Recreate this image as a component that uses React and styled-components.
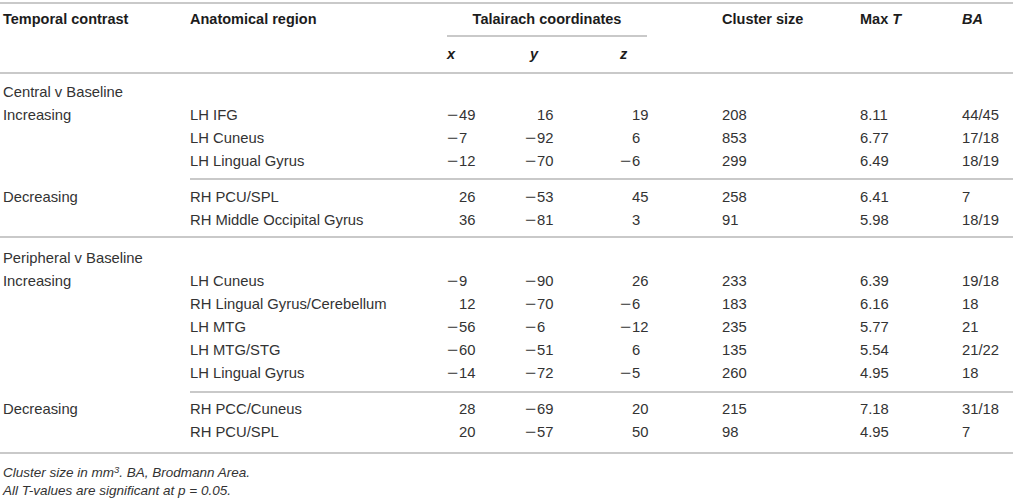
import React from 'react';
import styled, { createGlobalStyle } from 'styled-components';

const Global = createGlobalStyle`
  html, body { margin: 0; padding: 0; background: #fff; }
  body { font-family: "Liberation Sans", Arial, Helvetica, sans-serif; color: #333; }
`;

const RULE = '#c9c9c9';

const Page = styled.div`
  width: 1013px;
  padding-top: 2px;
`;

const Table = styled.table`
  width: 1013px;
  table-layout: fixed;
  border-collapse: separate;
  border-spacing: 0;
  font-size: 14.8px;
  line-height: 23px;
`;

const HeadCell = styled.th`
  padding: ${p => p.$pt ?? 0}px 0 ${p => p.$pb ?? 0}px ${p => p.$pl ?? 0}px;
  text-align: ${p => (p.$center ? 'center' : 'left')};
  vertical-align: top;
  font-size: 14.5px;
  font-weight: bold;
  color: #1c1c1c;
  white-space: nowrap;
  border-top: ${p => (p.$top ? `2px solid ${RULE}` : 'none')};
  border-bottom: ${p => (p.$bottom ? `2px solid ${RULE}` : 'none')};
`;

const Ital = styled.i`
  font-style: italic;
`;

const Cell = styled.td`
  padding: ${p => p.$pt ?? 0}px 0 ${p => p.$pb ?? 0}px ${p => p.$pl ?? 0}px;
  vertical-align: top;
  white-space: nowrap;
  color: #333;
  border-top: ${p =>
    p.$rule ? `2px solid ${RULE}` : p.$gap ? '2px solid transparent' : 'none'};
`;

const NumText = styled.span`
  display: inline-block;
  padding-left: ${p => (p.$pos ? 12 : 0)}px;
`;

const MinusSign = styled.span`
  display: inline-block;
  width: 12px;
  transform: scaleX(1.3);
  transform-origin: left center;
`;

const Notes = styled.div`
  margin-top: 10px;
  padding-left: 3px;
  font-size: 13.5px;
  line-height: 18px;
  font-style: italic;
  color: #333;
`;

const Sup = styled.sup`
  font-size: 0.7em;
  line-height: 0;
  vertical-align: 0.45em;
`;

const Num = ({ v }) =>
  v < 0 ? (
    <NumText>
      <MinusSign>−</MinusSign>
      {Math.abs(v)}
    </NumText>
  ) : (
    <NumText $pos>{v}</NumText>
  );

const sections = [
  {
    title: 'Central v Baseline',
    pad: 7,
    groups: [
      {
        label: 'Increasing',
        pt: 0,
        pb: 5,
        rows: [
          ['LH IFG', -49, 16, 19, 208, '8.11', '44/45'],
          ['LH Cuneus', -7, -92, 6, 853, '6.77', '17/18'],
          ['LH Lingual Gyrus', -12, -70, -6, 299, '6.49', '18/19'],
        ],
      },
      {
        label: 'Decreasing',
        pt: 6,
        pb: 4,
        rows: [
          ['RH PCU/SPL', 26, -53, 45, 258, '6.41', '7'],
          ['RH Middle Occipital Gyrus', 36, -81, 3, 91, '5.98', '18/19'],
        ],
      },
    ],
  },
  {
    title: 'Peripheral v Baseline',
    pad: 9,
    groups: [
      {
        label: 'Increasing',
        pt: 0,
        pb: 6,
        rows: [
          ['LH Cuneus', -9, -90, 26, 233, '6.39', '19/18'],
          ['RH Lingual Gyrus/Cerebellum', 12, -70, -6, 183, '6.16', '18'],
          ['LH MTG', -56, -6, -12, 235, '5.77', '21'],
          ['LH MTG/STG', -60, -51, 6, 135, '5.54', '21/22'],
          ['LH Lingual Gyrus', -14, -72, -5, 260, '4.95', '18'],
        ],
      },
      {
        label: 'Decreasing',
        pt: 5,
        pb: 8,
        rows: [
          ['RH PCC/Cuneus', 28, -69, 20, 215, '7.18', '31/18'],
          ['RH PCU/SPL', 20, -57, 50, 98, '4.95', '7'],
        ],
      },
    ],
  },
];

export default function App() {
  const body = [];
  sections.forEach((sec, si) => {
    const fullRule = si > 0;
    body.push(
      <tr key={`s${si}`}>
        <Cell $pl={3} $pt={sec.pad} $rule={fullRule}>
          {sec.title}
        </Cell>
        {Array.from({ length: 8 }).map((_, k) => (
          <Cell key={k} $pt={sec.pad} $rule={fullRule} />
        ))}
      </tr>
    );
    sec.groups.forEach((g, gi) => {
      const ruled = gi > 0;
      g.rows.forEach((r, ri) => {
        const first = ri === 0;
        const last = ri === g.rows.length - 1;
        const pt = first ? g.pt : 0;
        const pb = last ? g.pb : 0;
        const rule = first && ruled;
        body.push(
          <tr key={`s${si}g${gi}r${ri}`}>
            <Cell $pl={3} $pt={pt} $pb={pb} $gap={rule}>
              {first ? g.label : ''}
            </Cell>
            <Cell $pt={pt} $pb={pb} $rule={rule}>{r[0]}</Cell>
            <Cell $pt={pt} $pb={pb} $rule={rule}><Num v={r[1]} /></Cell>
            <Cell $pt={pt} $pb={pb} $rule={rule}><Num v={r[2]} /></Cell>
            <Cell $pt={pt} $pb={pb} $rule={rule}><Num v={r[3]} /></Cell>
            <Cell $pt={pt} $pb={pb} $rule={rule} />
            <Cell $pt={pt} $pb={pb} $rule={rule}>{r[4]}</Cell>
            <Cell $pt={pt} $pb={pb} $rule={rule}>{r[5]}</Cell>
            <Cell $pt={pt} $pb={pb} $rule={rule}>{r[6]}</Cell>
          </tr>
        );
      });
    });
  });

  return (
    <Page>
      <Global />
      <Table>
        <colgroup>
          <col style={{ width: 190 }} />
          <col style={{ width: 257 }} />
          <col style={{ width: 78 }} />
          <col style={{ width: 95 }} />
          <col style={{ width: 27 }} />
          <col style={{ width: 75 }} />
          <col style={{ width: 138 }} />
          <col style={{ width: 102 }} />
          <col style={{ width: 51 }} />
        </colgroup>
        <thead>
          <tr>
            <HeadCell $top $pt={4} $pl={3}>Temporal contrast</HeadCell>
            <HeadCell $top $pt={4}>Anatomical region</HeadCell>
            <HeadCell $top $pt={4} $pb={4} $bottom $center colSpan={3}>
              Talairach coordinates
            </HeadCell>
            <HeadCell $top $pt={4} />
            <HeadCell $top $pt={4}>Cluster size</HeadCell>
            <HeadCell $top $pt={4}>
              Max <Ital>T</Ital>
            </HeadCell>
            <HeadCell $top $pt={4}>
              <Ital>BA</Ital>
            </HeadCell>
          </tr>
          <tr>
            <HeadCell $bottom $pt={6} $pb={6} />
            <HeadCell $bottom $pt={6} $pb={6} />
            <HeadCell $bottom $pt={6} $pb={6}><Ital>x</Ital></HeadCell>
            <HeadCell $bottom $pt={6} $pb={6} $pl={5}><Ital>y</Ital></HeadCell>
            <HeadCell $bottom $pt={6} $pb={6}><Ital>z</Ital></HeadCell>
            <HeadCell $bottom $pt={6} $pb={6} />
            <HeadCell $bottom $pt={6} $pb={6} />
            <HeadCell $bottom $pt={6} $pb={6} />
            <HeadCell $bottom $pt={6} $pb={6} />
          </tr>
        </thead>
        <tbody>{body}</tbody>
        <tfoot>
          <tr>
            {Array.from({ length: 9 }).map((_, k) => (
              <Cell key={k} $rule />
            ))}
          </tr>
        </tfoot>
      </Table>
      <Notes>
        Cluster size in mm<Sup>3</Sup>. BA, Brodmann Area.
        <br />
        All T-values are significant at p = 0.05.
      </Notes>
    </Page>
  );
}
